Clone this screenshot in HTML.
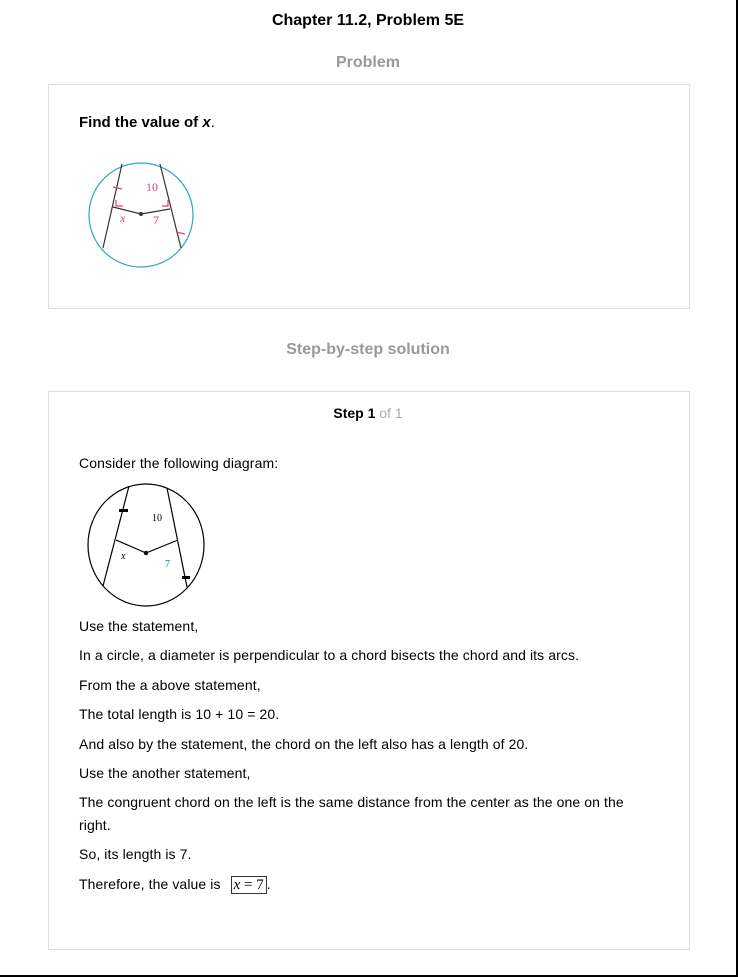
<!DOCTYPE html>
<html><head><meta charset="utf-8"><style>
body{margin:0;background:#fff;font-family:"Liberation Sans",Arial,sans-serif;color:#000}
.pg{position:relative;width:736px;height:975px;border-right:2px solid #000;border-bottom:2px solid #000;overflow:hidden}
.a{position:absolute;white-space:nowrap}
.c{left:0;width:736px;text-align:center}
.h{font-weight:bold;font-size:16px;color:#999}
.box{position:absolute;left:48px;width:640px;border:1px solid #ddd}
.t{position:absolute;left:79px;font-size:14px;line-height:16px;white-space:nowrap;letter-spacing:0.1px}
</style></head><body><div class="pg">
<div class="a c" style="top:12px;font-weight:bold;font-size:16px;line-height:18px">Chapter 11.2, Problem 5E</div>
<div class="a c h" style="top:54px">Problem</div>
<div class="box" style="top:84px;height:223px"></div>
<div class="t" style="top:115px;font-weight:bold;font-size:15px;letter-spacing:0">Find the value of <i>x</i><span style="font-weight:normal">.</span></div>
<svg class="a" style="left:0;top:0" width="738" height="977">
<g fill="none" stroke-width="1.2">
<circle cx="141" cy="215" r="52" stroke="#2aa8c8"/>
<path d="M122 164L103 248M160 164L181 248M113 207L141 214L170 209" stroke="#333"/>
<path d="M113 187L122 189M176 232L185 234M116 200v6h7M168 200v6h-6" stroke="#e0407a"/>
<ellipse cx="146" cy="545" rx="58" ry="61" stroke="#000"/>
<path d="M129 486L103 586M167 488L187 587M116 540L146 553L178 540" stroke="#000"/>
</g>
<circle cx="141" cy="214" r="2" fill="#333"/>
<circle cx="146" cy="553" r="2.2" fill="#000"/>
<rect x="119" y="509" width="9" height="3" fill="#000"/><rect x="182" y="576" width="8" height="3" fill="#000"/>
<g font-family="Liberation Serif,serif" font-size="12">
<text x="146" y="191" fill="#e0407a">10</text><text x="120" y="222" fill="#e0407a" font-style="italic">x</text><text x="153" y="224" fill="#e0407a">7</text>
<text x="152" y="521" font-size="10" fill="#000">10</text><text x="121" y="559" font-size="10" fill="#000" font-style="italic">x</text><text x="165" y="567" font-size="10" fill="#2a6a8a">7</text>
</g>
</svg>
<div class="a c h" style="top:341px">Step-by-step solution</div>
<div class="box" style="top:391px;height:557px"></div>
<div class="a c" style="top:405px;font-size:14px"><b>Step 1</b> <span style="color:#aaa">of 1</span></div>
<div class="t" style="top:455px">Consider the following diagram:</div>
<div class="t" style="top:618px">Use the statement,</div>
<div class="t" style="top:647px">In a circle, a diameter is perpendicular to a chord bisects the chord and its arcs.</div>
<div class="t" style="top:677px">From the a above statement,</div>
<div class="t" style="top:706px">The total length is 10 + 10 = 20.</div>
<div class="t" style="top:736px">And also by the statement, the chord on the left also has a length of 20.</div>
<div class="t" style="top:765px">Use the another statement,</div>
<div class="t" style="top:794px">The congruent chord on the left is the same distance from the center as the one on the</div>
<div class="t" style="top:817px">right.</div>
<div class="t" style="top:846px">So, its length is 7.</div>
<div class="t" style="top:876px">Therefore, the value is <span style="display:inline-block;margin-left:6px;border:1px solid #333;padding:0 2px;font-family:'Liberation Serif',serif;font-size:15px;line-height:16px;letter-spacing:0"><i>x</i> = 7</span>.</div>
</div></body></html>
